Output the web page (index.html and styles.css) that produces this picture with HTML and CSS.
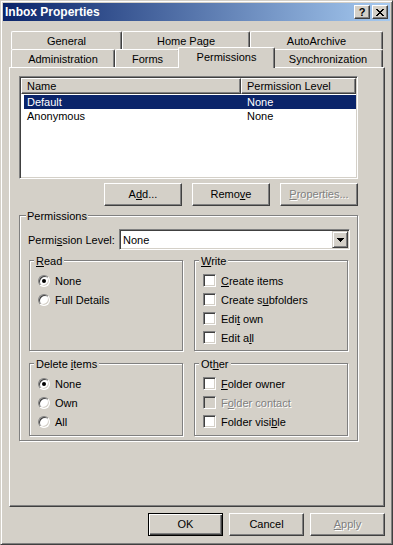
FILE: index.html
```html
<!DOCTYPE html>
<html lang="en">
<head>
    <meta charset="UTF-8">
    <meta name="viewport" content="width=device-width, initial-scale=1.0">
    <title>Inbox Properties</title>
    <link rel="stylesheet" href="styles.css">
</head>
<body>
    <div class="window">
        <div class="titlebar">
            <span class="title">Inbox Properties</span>
            <div class="caption-btns">
                <div class="caption-btn help">?</div>
                <div class="caption-btn close">
                    <svg width="8" height="7" viewBox="0 0 8 7" shape-rendering="crispEdges">
                        <path d="M0 0h2v1H0zM6 0h2v1H6zM1 1h2v1H1zM5 1h2v1H5zM2 2h4v1H2zM3 3h2v1H3zM2 4h4v1H2zM1 5h2v1H1zM5 5h2v1H5zM0 6h2v1H0zM6 6h2v1H6z"/>
                    </svg>
                </div>
            </div>
        </div>

        <div class="dialog-body">
            <!-- Tab strip, two rows -->
            <div class="tabs">
                <div class="tab-row">
                    <div class="tab t-general">General</div>
                    <div class="tab t-homepage">Home Page</div>
                    <div class="tab t-archive">AutoArchive</div>
                </div>
                <div class="tab-row">
                    <div class="tab t-admin">Administration</div>
                    <div class="tab t-forms">Forms</div>
                    <div class="tab t-perms active">Permissions</div>
                    <div class="tab t-sync">Synchronization</div>
                </div>
            </div>

            <div class="panel">
                <div class="listview">
                    <div class="list-header">
                        <div class="hcell col-name">Name</div>
                        <div class="hcell col-level">Permission Level</div>
                    </div>
                    <div class="list-row selected">
                        <div class="cell col-name">Default</div>
                        <div class="cell col-level">None</div>
                    </div>
                    <div class="list-row">
                        <div class="cell col-name">Anonymous</div>
                        <div class="cell col-level">None</div>
                    </div>
                </div>

                <div class="list-buttons">
                    <div class="btn wide">A<u>d</u>d...</div>
                    <div class="btn wide">Remo<u>v</u>e</div>
                    <div class="btn wide disabled"><u>P</u>roperties...</div>
                </div>

                <div class="group perm-group">
                    <div class="group-title">Permissions</div>
                    <div class="combo-row">
                        <span class="combo-label">Permi<u>s</u>sion Level:</span>
                        <div class="combo">
                            <span class="combo-value">None</span>
                            <div class="combo-btn">
                                <svg width="7" height="4" viewBox="0 0 7 4" shape-rendering="crispEdges">
                                    <path d="M0 0h7v1H0zM1 1h5v1H1zM2 2h3v1H2zM3 3h1v1H3z"/>
                                </svg>
                            </div>
                        </div>
                    </div>

                    <div class="subgroups">
                        <div class="group sub tall">
                            <div class="group-title"><u>R</u>ead</div>
                            <div class="opt"><span class="radio checked"></span><span>None</span></div>
                            <div class="opt"><span class="radio"></span><span>Full Details</span></div>
                        </div>
                        <div class="group sub tall">
                            <div class="group-title"><u>W</u>rite</div>
                            <div class="opt"><span class="check"></span><span><u>C</u>reate items</span></div>
                            <div class="opt"><span class="check"></span><span>Create s<u>u</u>bfolders</span></div>
                            <div class="opt"><span class="check"></span><span>Edi<u>t</u> own</span></div>
                            <div class="opt"><span class="check"></span><span>Edit a<u>l</u>l</span></div>
                        </div>
                        <div class="group sub short">
                            <div class="group-title">Delete <u>i</u>tems</div>
                            <div class="opt"><span class="radio checked"></span><span>None</span></div>
                            <div class="opt"><span class="radio"></span><span>Own</span></div>
                            <div class="opt"><span class="radio"></span><span>All</span></div>
                        </div>
                        <div class="group sub short">
                            <div class="group-title">Ot<u>h</u>er</div>
                            <div class="opt"><span class="check"></span><span><u>F</u>older owner</span></div>
                            <div class="opt disabled"><span class="check"></span><span>F<u>o</u>lder contact</span></div>
                            <div class="opt"><span class="check"></span><span>Folder visi<u>b</u>le</span></div>
                        </div>
                    </div>
                </div>
            </div>

            <div class="dialog-buttons">
                <div class="btn default">OK</div>
                <div class="btn">Cancel</div>
                <div class="btn disabled"><u>A</u>pply</div>
            </div>
        </div>
    </div>
</body>
</html>
```

FILE: styles.css
```css
* {
    margin: 0;
    padding: 0;
    box-sizing: border-box;
}

body {
    font-family: "Liberation Sans", Arial, sans-serif;
    font-size: 11px;
    color: #000;
    background: #d4d0c8;
}

u {
    text-decoration: underline;
    text-underline-offset: 1px;
}

/* window frame */
.window {
    width: 393px;
    height: 545px;
    background: #d4d0c8;
    border: 1px solid;
    border-color: #d4d0c8 #404040 #404040 #d4d0c8;
    box-shadow: inset 1px 1px #fff, inset -1px -1px #808080;
    padding: 2px;
    display: flex;
    flex-direction: column;
}

.titlebar {
    height: 18px;
    display: flex;
    align-items: center;
    padding-left: 2px;
    background: linear-gradient(to right, #0a246a, #a6caf0);
    color: #fff;
    font-size: 12px;
    font-weight: bold;
}

.caption-btns {
    margin-left: auto;
    display: flex;
    gap: 2px;
    padding-right: 2px;
}

.caption-btn {
    width: 16px;
    height: 14px;
    background: #d4d0c8;
    border: 1px solid;
    border-color: #fff #404040 #404040 #fff;
    box-shadow: inset -1px -1px #808080;
    color: #000;
    display: flex;
    align-items: center;
    justify-content: center;
    font-size: 11px;
    font-weight: bold;
    line-height: 12px;
}

.caption-btn svg {
    fill: #000;
    margin-top: 1px;
}

.dialog-body {
    flex: 1;
    padding: 10px 5px 0 6px;
    display: flex;
    flex-direction: column;
}

/* tabs */
.tabs {
    margin-left: 2px;
    width: 372px;
}

.tab-row {
    display: flex;
    align-items: flex-start;
    height: 18px;
}

.tab {
    height: 18px;
    padding-top: 1px;
    line-height: 16px;
    text-align: center;
    background: #d4d0c8;
    border-top: 1px solid #fff;
    border-left: 1px solid #fff;
    border-right: 1px solid #404040;
    box-shadow: inset -1px 0 #808080;
    border-radius: 2px 2px 0 0;
    white-space: nowrap;
}

.t-general { width: 111px; }
.t-homepage { width: 128px; }
.t-archive { width: 133px; }
.t-admin { width: 104px; }
.t-forms { width: 65px; }
.t-perms { width: 97px; }
.t-sync { width: 110px; }

.tab.active {
    height: 21px;
    margin: -2px -2px 0 -2px;
    position: relative;
    z-index: 1;
}

.panel {
    width: 376px;
    height: 440px;
    background: #d4d0c8;
    border: 1px solid;
    border-color: #fff #404040 #404040 #fff;
    box-shadow: inset -1px -1px #808080;
    padding: 8px 9px 0 9px;
}

/* list view */
.listview {
    width: 339px;
    height: 103px;
    background: #fff;
    border: 1px solid;
    border-color: #808080 #fff #fff #808080;
    box-shadow: inset 1px 1px #404040, inset -1px -1px #d4d0c8;
    padding: 1px;
}

.list-header {
    display: flex;
    height: 16px;
}

.hcell {
    background: #d4d0c8;
    border: 1px solid;
    border-color: #fff #404040 #404040 #fff;
    box-shadow: inset -1px -1px #808080;
    padding-left: 5px;
    line-height: 14px;
    white-space: nowrap;
}

.hcell.col-name { width: 220px; }
.hcell.col-level { flex: 1; }

.list-row {
    display: flex;
    height: 14px;
    line-height: 14px;
    margin: 1px 0 0 3px;
}

.list-row + .list-row {
    margin-top: 0;
}

.list-row.selected {
    background: #0a246a;
    color: #fff;
}

.cell.col-name {
    width: 217px;
    padding-left: 3px;
}

.cell.col-level {
    padding-left: 6px;
}

/* buttons */
.btn {
    width: 75px;
    height: 23px;
    line-height: 21px;
    text-align: center;
    background: #d4d0c8;
    border: 1px solid;
    border-color: #fff #404040 #404040 #fff;
    box-shadow: inset -1px -1px #808080;
}

.btn.wide {
    width: 78px;
}

.btn.default {
    border-color: #000;
    box-shadow: inset 1px 1px #fff, inset -1px -1px #404040, inset -2px -2px #808080;
}

.btn.disabled,
.opt.disabled {
    color: #808080;
    text-shadow: 1px 1px #fff;
}

.list-buttons {
    width: 339px;
    display: flex;
    justify-content: flex-end;
    gap: 10px;
    margin-top: 4px;
}

.dialog-buttons {
    display: flex;
    justify-content: flex-end;
    gap: 6px;
    margin-top: 6px;
}

/* etched group boxes */
.group {
    border: 1px solid #808080;
    box-shadow: inset 1px 1px #fff, 1px 1px #fff;
}

.group-title {
    width: fit-content;
    background: #d4d0c8;
    line-height: 13px;
    padding: 0 2px;
    margin-top: -6px;
}

.perm-group {
    width: 339px;
    margin-top: 9px;
    padding: 0 9px 4px 9px;
}

.perm-group > .group-title {
    margin-left: -3px;
    padding: 0 1px;
}

.combo-row {
    display: flex;
    align-items: center;
    margin-top: 6px;
}

.combo-label {
    width: 91px;
    margin-left: -1px;
    flex-shrink: 0;
}

.combo {
    width: 231px;
    height: 21px;
    flex-shrink: 0;
    margin-right: -2px;
    display: flex;
    align-items: center;
    background: #fff;
    border: 1px solid;
    border-color: #808080 #fff #fff #808080;
    box-shadow: inset 1px 1px #404040, inset -1px -1px #d4d0c8;
    padding: 1px;
}

.combo-value {
    flex: 1;
    padding-left: 2px;
}

.combo-btn {
    width: 16px;
    height: 100%;
    background: #d4d0c8;
    border: 1px solid;
    border-color: #d4d0c8 #404040 #404040 #d4d0c8;
    box-shadow: inset 1px 1px #fff, inset -1px -1px #808080;
    display: flex;
    align-items: center;
    justify-content: center;
}

.combo-btn svg {
    fill: #000;
}

.subgroups {
    display: grid;
    grid-template-columns: 154px 154px;
    column-gap: 11px;
    row-gap: 12px;
    margin-top: 10px;
}

.sub {
    padding: 0 8px;
}

.sub.tall { height: 91px; }
.sub.short { height: 73px; }

.sub .group-title {
    margin-left: -4px;
    margin-bottom: 3px;
}

.opt {
    height: 19px;
    display: flex;
    align-items: center;
    gap: 5px;
    white-space: nowrap;
}

.radio {
    width: 12px;
    height: 12px;
    flex-shrink: 0;
    border-radius: 50%;
    background: #fff;
    border: 1px solid;
    border-color: #808080 #fff #fff #808080;
    box-shadow: inset 1px 1px #404040, inset -1px -1px #d4d0c8;
    display: flex;
    align-items: center;
    justify-content: center;
}

.radio.checked::after {
    content: "";
    width: 4px;
    height: 4px;
    border-radius: 50%;
    background: #000;
}

.check {
    width: 13px;
    height: 13px;
    flex-shrink: 0;
    background: #fff;
    border: 1px solid;
    border-color: #808080 #fff #fff #808080;
    box-shadow: inset 1px 1px #404040, inset -1px -1px #d4d0c8;
}

.opt.disabled .check {
    background: #d4d0c8;
}
```
